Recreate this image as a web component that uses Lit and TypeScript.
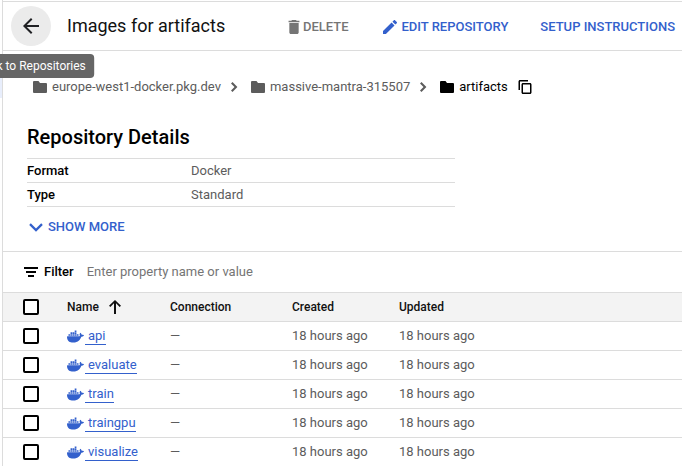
import { LitElement, html, css, svg } from "lit";
import { customElement, property, state } from "lit/decorators.js";

const ICONS: Record<string, { box: string; paths: string[] }> = {
  back: { box: "0 0 24 24", paths: ["M20 11H7.83l5.59-5.59L12 4l-8 8 8 8 1.41-1.41L7.83 13H20v-2z"] },
  trash: { box: "5 3 14 18", paths: ["M6 19c0 1.1.9 2 2 2h8c1.1 0 2-.9 2-2V7H6v12zM19 4h-3.5l-1-1h-5l-1 1H5v2h14V4z"] },
  pencil: { box: "3 3 18 18", paths: ["M3 17.25V21h3.75L17.81 9.94l-3.75-3.75L3 17.25zM20.71 7.04c.39-.39.39-1.02 0-1.41l-2.34-2.34c-.39-.39-1.02-.39-1.41 0l-1.83 1.83 3.75 3.75 1.83-1.83z"] },
  folder: { box: "0 0 14 12", paths: ["M1 0h4.500l1.500 2H13a1 1 0 0 1 1 1v8a1 1 0 0 1-1 1H1a1 1 0 0 1-1-1V1a1 1 0 0 1 1-1z"] },
  chevron: { box: "0 0 7 10", paths: ["M1.500 0 0 1.400 3.500 5 0 8.600 1.500 10 6.400 5z"] },
  expand: { box: "0 0 14 9", paths: ["M12.200 0.300 7 5.500 1.800 0.300 0.200 1.900 7 8.700l6.800-6.800z"] },
  copy: { box: "0 0 14 14", paths: ["M10 0H2C1.200 0 .5.700.5 1.500V10H2V1.500h8V0zM12 3H5c-.8 0-1.500.7-1.500 1.500V12.500c0 .8.700 1.500 1.500 1.500h7c.8 0 1.500-.7 1.500-1.500V4.500C13.500 3.700 12.800 3 12 3zm0 9.500H5v-8h7v8z"] },
  filter: { box: "0 0 14 10", paths: ["M0 0h14v2H0zM2 4h10v2H2zM4 8h6v2H4z"] },
  up: { box: "0 0 12 14", paths: ["M5 14V3.300L1.300 7 0 5.700 6 0l6 5.700L10.700 7 7 3.300V14z"] },
  docker: {
    box: "0 3 24 18",
    paths: [
      "M13.983 11.078h2.119a.186.186 0 00.186-.185V9.006a.186.186 0 00-.186-.186h-2.119a.185.185 0 00-.185.185v1.888c0 .102.083.185.185.185m-2.954-5.43h2.118a.186.186 0 00.186-.186V3.574a.186.186 0 00-.186-.185h-2.118a.185.185 0 00-.185.185v1.888c0 .102.082.185.185.185m0 2.716h2.118a.187.187 0 00.186-.186V6.29a.186.186 0 00-.186-.185h-2.118a.185.185 0 00-.185.185v1.887c0 .102.082.185.185.186m-2.93 0h2.12a.186.186 0 00.184-.186V6.29a.185.185 0 00-.185-.185H8.1a.185.185 0 00-.185.185v1.887c0 .102.083.185.185.186m-2.964 0h2.119a.186.186 0 00.185-.186V6.29a.185.185 0 00-.185-.185H5.136a.186.186 0 00-.186.185v1.887c0 .102.084.185.186.186m5.893 2.715h2.118a.186.186 0 00.186-.185V9.006a.186.186 0 00-.186-.186h-2.118a.185.185 0 00-.185.185v1.888c0 .102.082.185.185.185m-2.93 0h2.12a.185.185 0 00.184-.185V9.006a.185.185 0 00-.184-.186h-2.12a.185.185 0 00-.184.185v1.888c0 .102.083.185.185.185m-2.964 0h2.119a.185.185 0 00.185-.185V9.006a.185.185 0 00-.184-.186h-2.12a.186.186 0 00-.186.186v1.887c0 .102.084.185.186.185m-2.92 0h2.12a.185.185 0 00.184-.185V9.006a.185.185 0 00-.184-.186h-2.12a.185.185 0 00-.184.185v1.888c0 .102.082.185.185.185",
      "M23.763 9.89c-.065-.051-.672-.51-1.954-.51-.338.001-.676.03-1.01.087-.248-1.7-1.653-2.53-1.716-2.566l-.344-.199-.226.327c-.284.438-.49.922-.612 1.43-.23.97-.09 1.882.403 2.661-.595.332-1.55.413-1.744.42H.751a.751.751 0 00-.75.748 11.376 11.376 0 00.692 4.062c.545 1.428 1.355 2.48 2.41 3.124 1.18.723 3.1 1.137 5.275 1.137.983.003 1.963-.086 2.93-.266a12.248 12.248 0 003.823-1.389c.98-.567 1.86-1.288 2.61-2.136 1.252-1.418 1.998-2.997 2.553-4.4h.221c1.372 0 2.215-.549 2.68-1.009.309-.293.55-.65.707-1.046l.098-.288Z",
    ],
  },
};

@customElement("ui-icon")
class UiIcon extends LitElement {
  @property() name = "";

  static styles = css`
    :host { display: inline-flex; flex: none; }
    .glyph { width: 100%; height: 100%; fill: currentColor; }
  `;

  render() {
    const icon = ICONS[this.name];
    return html`<svg class="glyph" viewBox=${icon.box} aria-hidden="true">
      ${icon.paths.map((d) => svg`<path d=${d}></path>`)}
    </svg>`;
  }
}

const IMAGES = ["api", "evaluate", "train", "traingpu", "visualize"];

@customElement("app-root")
class AppRoot extends LitElement {
  @state() private selected = new Set<string>();

  static styles = css`
    :host {
      display: block;
      min-height: 100vh;
      box-sizing: border-box;
      overflow: hidden;
      font: 400 13px/20px Roboto, sans-serif;
      color: #5c5c5c;
      background: #fff;
    }
    .shell { display: grid; grid-template-columns: 2px 1fr; min-height: 100vh; }
    .rail { padding-top: 78px; }
    .rail-item { height: 20px; background: #e8eefc; }
    .panel { min-width: 0; border-left: 1px solid #dcdcdc; }
    button { font: inherit; color: inherit; background: none; border: 0; padding: 0; cursor: pointer; }
    a { color: inherit; text-decoration: none; }

    .header {
      display: flex;
      align-items: center;
      height: 48px;
      margin-top: 1px;
      padding: 0 7px 0 8px;
      border-top: 1px solid #dcdcdc;
      border-bottom: 1px solid #dcdcdc;
      white-space: nowrap;
    }
    .back { position: relative; display: flex; flex: none; }
    .back-button {
      display: flex; align-items: center; justify-content: center;
      width: 40px; height: 40px; border-radius: 50%;
      background: #ebebeb; color: #202124;
    }
    .back-icon { width: 24px; height: 24px; }
    .tooltip {
      position: absolute; top: 48px; left: 50%; transform: translateX(-50%);
      padding: 2px 8px; border-radius: 4px; font-size: 12px;
      background: #666; color: #fff; white-space: nowrap; z-index: 1;
    }
    .title { margin: 0 auto 0 16px; font-size: 18px; line-height: 24px; font-weight: 400; color: #111; }
    .actions { display: flex; gap: 32px; padding-top: 1px; font-weight: 500; color: #3360cc; }
    .action { display: flex; align-items: center; gap: 5px; }
    .action.muted { color: #757575; gap: 3px; margin-right: 2px; }
    .trash { width: 12px; height: 14px; }
    .pencil { width: 14px; height: 14px; }

    .crumbs {
      display: flex; align-items: center; list-style: none;
      margin: 0; padding: 26px 30px 0; white-space: nowrap;
    }
    .crumb, .crumb-link { display: flex; align-items: center; }
    .crumb-link { gap: 5px; }
    .crumb.current { color: #000; }
    .folder { width: 14px; height: 12px; }
    .separator { width: 7px; height: 10px; margin: 0 13px 0 10px; }
    .copy { display: flex; margin-left: 10px; }
    .copy-icon { width: 14px; height: 14px; }

    .details { padding: 27px 24px 14px; border-bottom: 1px solid #dcdcdc; }
    .details-title { margin: 0 0 8px; font-size: 20px; line-height: 26px; font-weight: 500; color: #000; }
    .facts { width: 428px; max-width: 100%; border-collapse: collapse; border-bottom: 1px solid #dcdcdc; }
    .facts th, .facts td { height: 23px; padding: 0; border-top: 1px solid #dcdcdc; text-align: left; }
    .facts th { width: 164px; font-weight: 500; color: #000; }
    .more { display: flex; align-items: center; gap: 5px; margin: 10px 0 0 2px; font-weight: 500; color: #3360cc; }
    .more-icon { width: 14px; height: 9px; }

    .filter { display: flex; align-items: center; height: 40px; padding: 0 24px 0 21px; }
    .filter-label { display: flex; align-items: center; gap: 6px; font-weight: 500; color: #000; }
    .filter-icon { width: 14px; height: 10px; }
    .filter-input {
      flex: 1; min-width: 0; margin-left: 13px; padding: 0; border: 0; outline: 0;
      font: inherit; color: #333; background: none;
    }
    .filter-input::placeholder { color: #757575; opacity: 1; }

    .images { width: 100%; table-layout: fixed; border-collapse: separate; border-spacing: 0; white-space: nowrap; }
    .images th, .images td { height: 28px; padding: 0; text-align: left; border-bottom: 1px solid #dcdcdc; }
    .images th { background: #f3f3f3; border-top: 1px solid #dcdcdc; font-size: 12px; font-weight: 500; color: #111; }
    .images tr:last-child td { border-bottom: 0; }
    .col-check { width: 64px; }
    .col-name { width: 103px; }
    .col-connection { width: 122px; }
    .col-created { width: 107px; }
    .sort { display: flex; align-items: center; gap: 10px; }
    .sort-icon { width: 12px; height: 14px; }
    .check {
      appearance: none; display: block; box-sizing: border-box;
      width: 16px; height: 16px; margin: 0 0 0 20px;
      border: 2px solid #000; border-radius: 2px; background: #fff;
    }
    .check:checked { background: #3360cc; border-color: #3360cc; }
    .image { display: flex; align-items: center; gap: 1px; color: #3360cc; }
    .docker { width: 17px; height: 13px; }
    .image-link { padding-left: 3px; line-height: 16px; border-bottom: 1px solid #3360cc; }
  `;

  private toggle(name: string) {
    const next = new Set(this.selected);
    next.has(name) ? next.delete(name) : next.add(name);
    this.selected = next;
  }

  private toggleAll() {
    this.selected = new Set(this.selected.size === IMAGES.length ? [] : IMAGES);
  }

  private renderCrumb(label: string) {
    return html`<li class="crumb">
      <a class="crumb-link" href="#"><ui-icon class="folder" name="folder"></ui-icon>${label}</a>
      <ui-icon class="separator" name="chevron"></ui-icon>
    </li>`;
  }

  private renderRow(name: string) {
    return html`<tr>
      <td>
        <input class="check" type="checkbox" aria-label="Select ${name}"
          .checked=${this.selected.has(name)} @change=${() => this.toggle(name)} />
      </td>
      <td><div class="image"><ui-icon class="docker" name="docker"></ui-icon><a class="image-link" href="#${name}">${name}</a></div></td>
      <td>—</td>
      <td>18 hours ago</td>
      <td>18 hours ago</td>
    </tr>`;
  }

  render() {
    return html`
      <div class="shell">
        <div class="rail"><div class="rail-item"></div></div>
        <main class="panel">
          <header class="header">
            <div class="back">
              <button class="back-button" aria-labelledby="back-tip">
                <ui-icon class="back-icon" name="back"></ui-icon>
              </button>
              <div class="tooltip" id="back-tip" role="tooltip">Back to Repositories</div>
            </div>
            <h1 class="title">Images for artifacts</h1>
            <div class="actions">
              <button class="action muted"><ui-icon class="trash" name="trash"></ui-icon>DELETE</button>
              <button class="action"><ui-icon class="pencil" name="pencil"></ui-icon>EDIT REPOSITORY</button>
              <button class="action">SETUP INSTRUCTIONS</button>
            </div>
          </header>
          <nav aria-label="Breadcrumb">
            <ol class="crumbs">
              ${this.renderCrumb("europe-west1-docker.pkg.dev")}
              ${this.renderCrumb("massive-mantra-315507")}
              <li class="crumb current">
                <a class="crumb-link" href="#"><ui-icon class="folder" name="folder"></ui-icon>artifacts</a>
                <button class="copy" aria-label="Copy path"><ui-icon class="copy-icon" name="copy"></ui-icon></button>
              </li>
            </ol>
          </nav>
          <section class="details">
            <h2 class="details-title">Repository Details</h2>
            <table class="facts">
              <tr><th scope="row">Format</th><td>Docker</td></tr>
              <tr><th scope="row">Type</th><td>Standard</td></tr>
            </table>
            <button class="more"><ui-icon class="more-icon" name="expand"></ui-icon>SHOW MORE</button>
          </section>
          <div class="filter">
            <label class="filter-label" for="filter"><ui-icon class="filter-icon" name="filter"></ui-icon>Filter</label>
            <input class="filter-input" id="filter" type="text" placeholder="Enter property name or value" />
          </div>
          <table class="images">
            <thead>
              <tr>
                <th class="col-check">
                  <input class="check" type="checkbox" aria-label="Select all images"
                    .checked=${this.selected.size === IMAGES.length} @change=${this.toggleAll} />
                </th>
                <th class="col-name"><button class="sort">Name<ui-icon class="sort-icon" name="up"></ui-icon></button></th>
                <th class="col-connection">Connection</th>
                <th class="col-created">Created</th>
                <th>Updated</th>
              </tr>
            </thead>
            <tbody>${IMAGES.map((name) => this.renderRow(name))}</tbody>
          </table>
        </main>
      </div>
    `;
  }
}
